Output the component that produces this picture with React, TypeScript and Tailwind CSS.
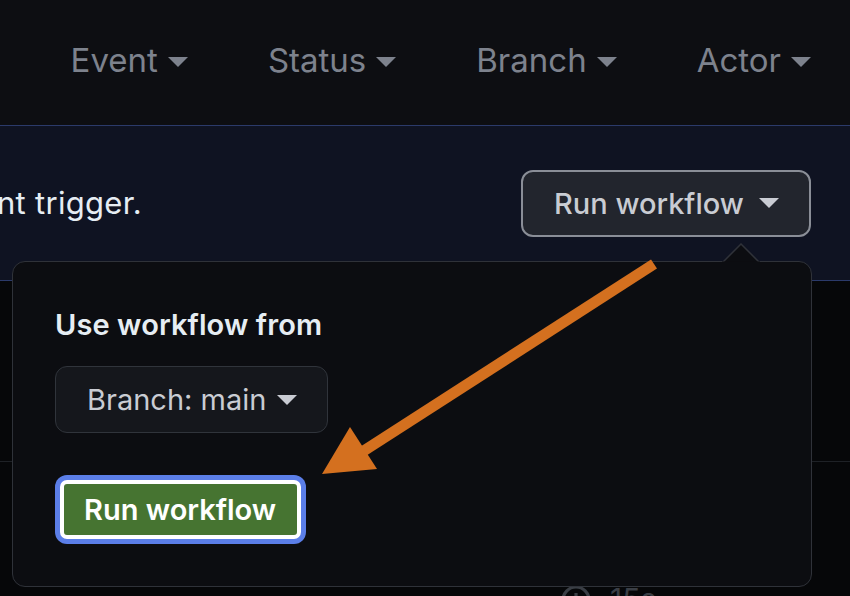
import React from 'react';

const Caret = ({ className }: { className?: string }) => (
  <svg width="20" height="10" viewBox="0 0 20 10" className={className}>
    <polygon points="0,0 20,0 10,10" fill="currentColor" />
  </svg>
);

const filters = ['Event', 'Status', 'Branch', 'Actor'];

const App: React.FC = () => {
  return (
    <div className="relative w-[850px] h-[596px] overflow-hidden bg-[#0d0e12] font-['Inter',sans-serif]">
      {/* Filter bar */}
      <div className="h-[125px] flex items-center justify-end gap-[80px] pr-[39px] pb-[4px]">
        {filters.map((f) => (
          <div key={f} className="flex items-center gap-[10px] text-[#7d828d]">
            <span className="text-[33px] leading-none">{f}</span>
            <Caret className="mt-[2px]" />
          </div>
        ))}
      </div>

      {/* Dispatch banner */}
      <div className="h-[156px] border-y border-[#2b3a6a] bg-[#0f1322] flex items-center justify-between pr-[39px]">
        <div className="w-[142px] flex justify-end overflow-hidden whitespace-nowrap">
          <span className="text-[31px] text-[#e6edf3] tracking-[0.3px]">
            This workflow has a workflow_dispatch event trigger.
          </span>
        </div>
        <button className="h-[67px] w-[290px] flex items-center justify-between pl-[31px] pr-[30px] rounded-[12px] border-2 border-[#8a8e97] bg-[#22252d] text-[#c9ccd3]">
          <span className="text-[29px] font-medium leading-none">Run workflow</span>
          <Caret />
        </button>
      </div>

      {/* Runs list behind the menu */}
      <div className="bg-[#060709]">
        <div className="h-[181px] border-b border-[#1e2126]" />
        <div className="flex items-center gap-[18px] pl-[560px] pt-[115px] text-[#3a3e45]">
          <svg width="32" height="32" viewBox="0 0 16 16" fill="none" stroke="currentColor" strokeWidth="1.6">
            <circle cx="8" cy="8" r="6.5" />
            <path d="M8 4.5V8l2.5 1.5" />
          </svg>
          <span className="text-[30px]">15s</span>
        </div>
      </div>

      {/* Run workflow menu */}
      <div className="absolute left-[12px] top-[261px] w-[800px] h-[326px] rounded-[13px] border-[1.5px] border-[#2f3239] bg-[#0c0d11] pl-[42px] pt-[48px]">
        <svg width="38" height="20" viewBox="0 0 38 20" className="absolute left-[709px] top-[-19px]">
          <polygon points="0,20 19,1 38,20" fill="#0c0d11" stroke="#2f3239" strokeWidth="1.5" />
          <rect x="0" y="18.5" width="38" height="3" fill="#0c0d11" />
        </svg>
        <div className="text-[29px] leading-none font-semibold text-[#e6edf3] tracking-[0.1px]">Use workflow from</div>

        <button className="mt-[27px] h-[67px] w-[273px] flex items-center justify-between pl-[31px] pr-[30px] rounded-[12px] border-[1.5px] border-[#30343b] bg-[#15171c] text-[#c9ccd3]">
          <span className="text-[29px] leading-none">Branch: main</span>
          <Caret />
        </button>

        <div className="mt-[42px] w-[251px] h-[69px] rounded-[12px] bg-[#5b7ee8] p-[5px]">
          <button className="w-full h-full rounded-[7px] border-[4px] border-white bg-[#467431] flex items-center pl-[20px] text-white">
            <span className="text-[29px] leading-none font-semibold">Run workflow</span>
          </button>
        </div>
      </div>

      {/* Annotation arrow */}
      <svg width="850" height="596" viewBox="0 0 850 596" className="absolute inset-0 pointer-events-none">
        <line x1="654" y1="264" x2="362" y2="452" stroke="#d4701f" strokeWidth="11" />
        <polygon points="322,474 350,427 377,469" fill="#d4701f" />
      </svg>
    </div>
  );
};

export default App;
